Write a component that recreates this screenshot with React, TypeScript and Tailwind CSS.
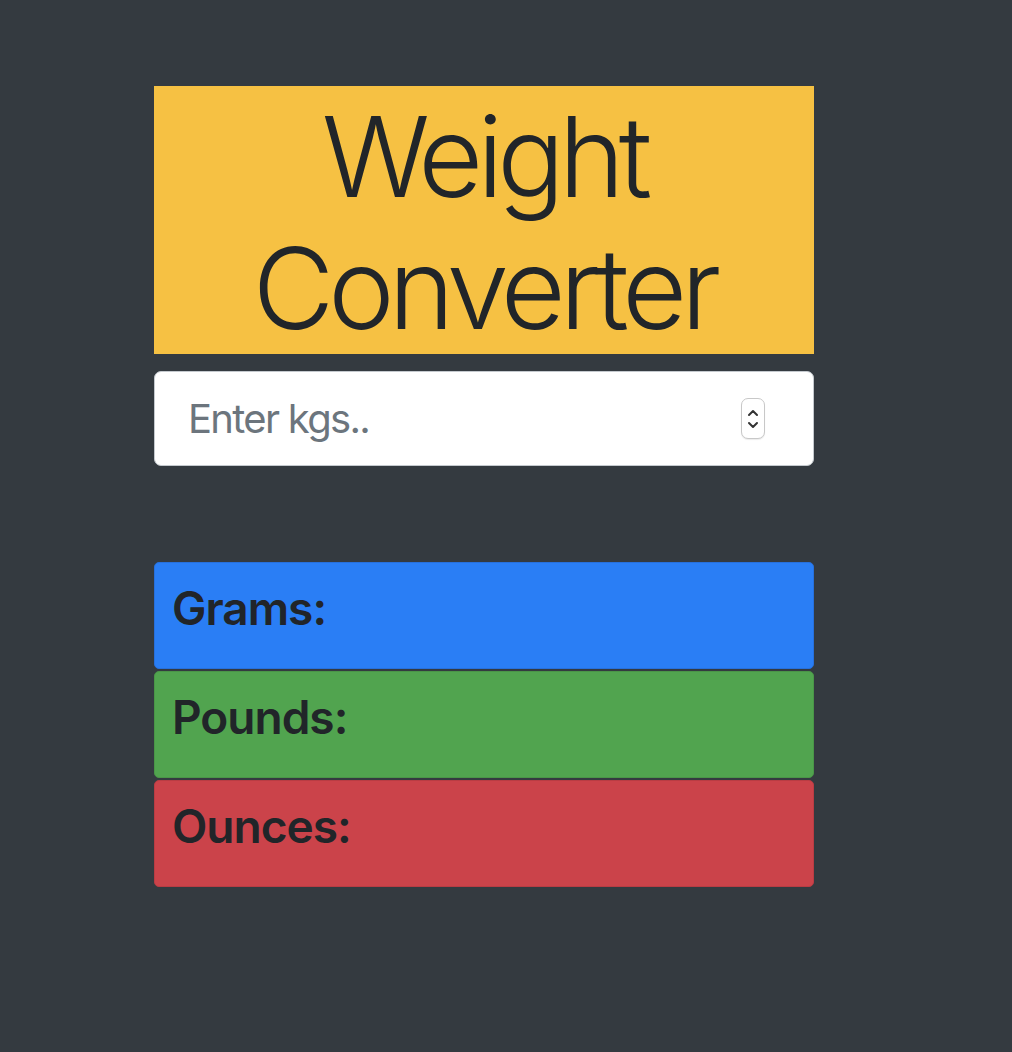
import React from "react";

/* ---------- Result row ---------- */

const Result = ({ label, tone }: { label: string; tone: string }) => (
  <div className={`h-[107px] rounded-[5px] border px-[17px] pt-[18px] ${tone}`}>
    <h4 className="text-[46px] font-semibold leading-[1.2] tracking-[-1px] text-[#212529]">{label}</h4>
  </div>
);

/* ---------- Spinner (number input arrows) ---------- */

const Spinner = () => (
  <div className="flex h-[41px] w-[24px] flex-col items-center justify-center gap-[4px] rounded-[7px] border border-[#c8c8c8] bg-white shadow-[0_1px_1px_rgba(0,0,0,0.08)]">
    <svg width="12" height="8" viewBox="0 0 12 8" fill="none">
      <path d="M2 6 L6 2 L10 6" stroke="#333" strokeWidth="2" strokeLinecap="round" strokeLinejoin="round" />
    </svg>
    <svg width="12" height="8" viewBox="0 0 12 8" fill="none">
      <path d="M2 2 L6 6 L10 2" stroke="#333" strokeWidth="2" strokeLinecap="round" strokeLinejoin="round" />
    </svg>
  </div>
);

export default function App() {
  return (
    <div className="min-h-[1052px] w-full bg-[#343a40] pt-[86px] font-['Inter',sans-serif]">
      <div className="ml-[154px] w-[660px]">
        {/* Header */}
        <div className="bg-[#f6c143] pt-[4px] text-center">
          <h1 className="text-[112px] font-light leading-[132px] tracking-[-6px] text-[#212529]">
            Weight Converter
          </h1>
        </div>

        {/* Input */}
        <div className="mt-[17px] flex h-[95px] items-center justify-between rounded-[7px] border border-[#c4c9ce] bg-white pl-[33px] pr-[48px]">
          <span className="text-[40px] tracking-[-1.7px] text-[#6c757d]">Enter kgs..</span>
          <Spinner />
        </div>

        {/* Results */}
        <div className="mt-[96px] flex flex-col gap-[2px]">
          <Result label="Grams:" tone="bg-[#2a7ef5] border-[#2770dc]" />
          <Result label="Pounds:" tone="bg-[#51a44f] border-[#4a9548]" />
          <Result label="Ounces:" tone="bg-[#cb434a] border-[#b93c43]" />
        </div>
      </div>
    </div>
  );
}
